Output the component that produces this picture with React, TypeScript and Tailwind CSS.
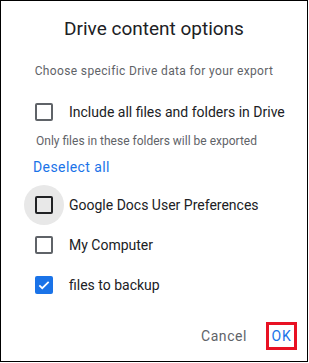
import React from "react";

function Box({ checked, dark }: { checked?: boolean; dark?: boolean }) {
  if (checked) {
    return (
      <div className="w-[18px] h-[18px] rounded-[2px] bg-[#1a73e8] flex items-center justify-center">
        <svg width="14" height="14" viewBox="0 0 24 24">
          <path d="M4 12.5l5 5L20 6.5" fill="none" stroke="#fff" strokeWidth="3" />
        </svg>
      </div>
    );
  }
  return (
    <div
      className={`w-[18px] h-[18px] rounded-[2px] border-2 ${dark ? "border-[#202124]" : "border-[#5f6368]"}`}
    />
  );
}

function Row({ label, checked, hover }: { label: string; checked?: boolean; hover?: boolean }) {
  return (
    <div className="flex items-center h-[40px]">
      <div className="w-[40px] h-[40px] ml-[23px] flex items-center justify-center relative">
        {hover && <div className="absolute inset-0 rounded-full bg-[#e8e8e8]" />}
        <div className="relative">
          <Box checked={checked} dark={hover} />
        </div>
      </div>
      <span className="ml-[5px] text-[14px] leading-[20px] text-[#202124]">{label}</span>
    </div>
  );
}

export default function App() {
  return (
    <div
      className="w-[308px] h-[362px] border border-black bg-white flex flex-col"
      style={{ fontFamily: "Roboto, 'Noto Sans', sans-serif" }}
    >
      <div className="mt-[16px] text-center text-[19px] leading-[24px] text-[#202124]">Drive content options</div>
      <div className="mt-[22px] text-center text-[12px] leading-[16px] text-[#5f6368] tracking-[0.03em]">
        Choose specific Drive data for your export
      </div>
      <div className="mt-[13px]">
        <Row label="Include all files and folders in Drive" />
      </div>
      <div className="ml-[35px] mt-[1px] text-[12px] leading-[16px] text-[#5f6368]">
        Only files in these folders will be exported
      </div>
      <div className="ml-[32px] mt-[9px] text-[14px] leading-[18px] text-[#1a73e8] tracking-[0.03em]">
        Deselect all
      </div>
      <div className="mt-[9px]">
        <Row label="Google Docs User Preferences" hover />
        <Row label="My Computer" />
        <Row label="files to backup" checked />
      </div>
      <div className="flex justify-end items-center mt-auto mb-[11px] mr-[10px]">
        <span className="text-[14px] text-[#5f6368] tracking-[0.04em] mr-[19px]">Cancel</span>
        <div className="border-[3px] border-[#e81123] w-[31px] h-[28px] flex items-center justify-center">
          <span className="text-[14px] text-[#1a73e8] tracking-[0.06em]">OK</span>
        </div>
      </div>
    </div>
  );
}
